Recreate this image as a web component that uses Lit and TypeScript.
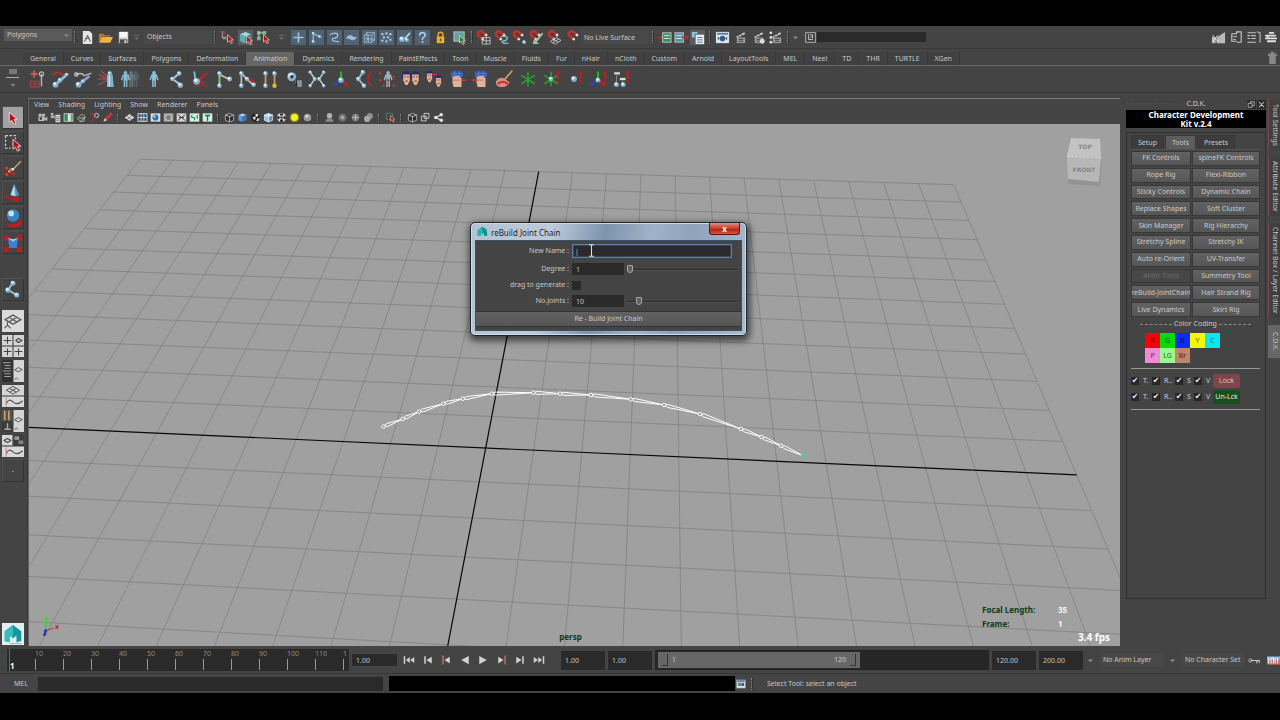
import { LitElement, html, css, svg } from "lit";
import { customElement } from "lit/decorators.js";

/* ---------- drawing primitives ---------- */
const ball = (x: number, y: number, r = 2) =>
  svg`<circle cx=${x} cy=${y} r=${r} fill="#7fb0cc"/><circle cx=${x - r * 0.25} cy=${y - r * 0.3} r=${r * 0.55} fill="#d8eef8"/>`;
const line = (d: string, c = "#a9c6d6", w = 1.4) =>
  svg`<path d=${d} fill="none" stroke=${c} stroke-width=${w} stroke-linecap="round" stroke-linejoin="round"/>`;
const fill = (d: string, c: string) => svg`<path d=${d} fill=${c}/>`;
const rect = (x: number, y: number, w: number, h: number, c: string) =>
  svg`<rect x=${x} y=${y} width=${w} height=${h} fill=${c}/>`;
const cursor = (x: number, y: number, c = "#b01218") =>
  svg`<path transform="translate(${x} ${y})" d="M0 0V8L2 6.300L3.600 9.500L5.300 8.700L3.800 5.600H6.300Z" fill=${c} stroke="#f3d9d9" stroke-width=".7"/>`;
const bang = (x = 13) => svg`<path d="M${x - 1.3} 1H${x + 1.5}L${x + 0.8} 8H${x - 0.6}Z" fill="#c01c20"/><circle cx=${x} cy="10" r="1.200" fill="#c01c20"/>`;
const magnet = (x = 0) => svg`<g transform="translate(${x} 0)"><path d="M7.500 10L3 6.500A3 3 0 0 1 7 2L11 5.500" fill="none" stroke="#c3302a" stroke-width="2.800"/><path d="M6.300 9L8.200 10.600M9.800 4.500L11.700 6.200" stroke="#e9e2e0" stroke-width="2.600"/></g>`;
const cube = (c1: string, c2: string, c3: string, s = "none") =>
  svg`<g stroke=${s} stroke-width="1"><path d="M2 4.500L8 2L14 4.500L8 7Z" fill=${c1}/><path d="M2 4.500L8 7V14.500L2 12Z" fill=${c2}/><path d="M14 4.500L8 7V14.500L14 12Z" fill=${c3}/></g>`;
const man = (x: number, c: string) =>
  svg`<circle cx=${x} cy="2.500" r="1.600" fill=${c}/><path d="M${x - 2} 4.500H${x + 2}L${x + 3.4} 9M${x - 2} 4.500L${x - 3.4} 9M${x - 1} 9V15M${x + 1} 9V15" stroke=${c} stroke-width="1.300" fill="none"/><path d="M${x - 1.7} 4H${x + 1.7}V9.500H${x - 1.7}Z" fill=${c}/>`;
const face = (x: number, y: number, s = 1) =>
  svg`<g transform="translate(${x} ${y}) scale(${s})"><path d="M-4 2Q-4-4 0-4Q4-4 4 2L2.800 3V-.5H-2.800V3Z" fill="#262c6c"/><path d="M-2.800-1H2.800V4L1 8H-1L-2.800 4Z" fill="#e3b092"/><path d="M-1.800 1H-.6M.6 1H1.800M-1 4.600H1" stroke="#5b2b25" stroke-width=".8"/></g>`;
const hand = svg`${fill("M3 1H13V7H3Z", "#2b4fb4")}${line("M3 3H13M3 5H13M6 1V7M10 1V7", "#6f92e0", 0.6)}${fill("M4 6L9 5L12 7L12 15H5L4 11Z", "#e2b196")}${line("M5 9H10", "#a86e55", 0.7)}`;
const axes3 = svg`${line("M8 9V2", "#28b02c", 2)}${line("M8 9L2 13.500", "#2848d0", 2)}${line("M8 9L14 13.500", "#c82020", 2)}`;
const star = svg`${line("M8 2V14M2.500 5L13.500 12M13.500 5L2.500 12", "#2a9c33", 1.4)}`;
const clap = svg`<path d="M4 8H13V14H4Z" fill="#9b9b9b"/><path d="M3.500 6.800L12 2.500L13 4.300L4.500 8.600Z" fill="#c9c9c9"/><path d="M5 6L7 7M8 4.400L10 5.600M6 10H11M6 12H11" stroke="#333" stroke-width=".9"/>`;
const diamondGrid = (y = 8, s = 1) => svg`<g transform="translate(8 ${y}) scale(${s})"><path d="M-6 0L0-3.500L6 0L0 3.500ZM-3-1.750L3 1.750M3-1.750L-3 1.750" fill="none" stroke="#555" stroke-width=".9"/></g>`;
const curveEd = (x: number, y: number, w: number, h: number) =>
  svg`<g transform="translate(${x} ${y})">${rect(0, 0, w, h, "#d9d9d9")}<path d="M3 ${h * 0.7}Q5 ${h * 0.1} 8 ${h * 0.5}T${w - 1} ${h * 0.4}" fill="none" stroke="#555" stroke-width=".8"/><path d="M3 0V${h}" stroke="#b66" stroke-width=".5"/></g>`;

/* ---------- icon table, every glyph on a 16 unit square ---------- */
const ICONS: Record<string, unknown> = {
  down: svg`${fill("M3 6H13L8 11Z", "#888")}`,
  downbar: svg`${line("M3 4H13", "#777", 1.2)}${fill("M4 8H12L8 12Z", "#777")}`,
  fileNew: svg`${fill("M3 1H10L13 4V15H3Z", "#e6e6e6")}${line("M5 12L8 6L11 12M6 9L10 9", "#666", 1.2)}`,
  fileOpen: svg`${fill("M1 4H6L7 5.500H13V7H4L2 13H1Z", "#b97c1d")}${fill("M4 7.500H16L13 13.500H1.500Z", "#edb33f")}`,
  fileSave: svg`${fill("M3 2H13V14H3Z", "#cfcfcf")}${rect(4, 2, 8, 6, "#f6f6f6")}${rect(4, 10, 8, 4, "#4b4b4b")}${rect(9, 11, 2, 3, "#ddd")}`,
  selHier: svg`${rect(1, 1, 4, 3, "#b8434a")}${rect(3, 7, 4, 3, "#6aa17a")}${line("M2.500 4V8.500H3", "#aaa", 1)}${cursor(8, 5)}`,
  selObj: svg`${rect(0, 0, 16, 16, "#5c5c5c")}${cube("#9ed9dc", "#58b0b6", "#3f8f97")}${cursor(9, 6)}`,
  selComp: svg`${rect(1, 1, 4, 4, "#6fae74")}${rect(7, 1, 4, 4, "#6fae74")}${rect(1, 7, 4, 4, "#6fae74")}${line("M3 3H9M3 3V9", "#cde", 0.8)}${cursor(8, 5)}`,
  mHandle: svg`${line("M8 2.500V13.500M2.500 8H13.500", "#9cc4dc", 2)}`,
  mJoint: svg`${line("M4 13V3L12 7", "#9cc4dc", 1.4)}${ball(4, 3)}${ball(12, 7)}${ball(4, 13)}`,
  mCurve: svg`${line("M3 4Q12 1 12 5T6 9Q3 13 13 13", "#9cc4dc", 1.6)}`,
  mSurf: svg`${fill("M1 9Q5 3 9 6T15 6Q12 13 8 11T1 9Z", "#8fc0de")}`,
  mLattice: svg`${line("M2 5H11V14H2ZM5 2H14V11M2 5L5 2M11 5L14 2M11 14L14 11M5 2V11H14M2 14L5 11M6.500 5V14M2 9.500H11", "#9cc4dc", 0.9)}`,
  mDyn: svg`${[[3, 4], [8, 3], [13, 4], [5, 8], [10, 8], [3, 12], [8, 13], [13, 11]].map(([a, b]) => ball(a, b, 1.5))}`,
  mRender: svg`${ball(5, 10, 3.5)}${ball(11, 11, 2.5)}${line("M9 9L14 3", "#c7dce8", 2)}`,
  mMisc: svg`${line("M4.500 5Q5 2 8 2T11.500 5Q11 7.500 8 8.500V10.500", "#a6cde6", 2)}<circle cx="8" cy="13.500" r="1.300" fill="#a6cde6"/>`,
  lock: svg`${line("M5.500 8V5Q5.500 2.500 8 2.500T10.500 5V8", "#d9a93a", 1.6)}${rect(4, 7, 8, 7, "#e9b52d")}${rect(7.3, 9, 1.5, 3, "#5a4510")}`,
  hilite: svg`<rect x="2" y="2" width="11" height="10" fill="#62a2a8" stroke="#b3c59a"/>${cursor(8, 6, "#3b7a3f")}`,
  snapGrid: svg`${magnet()}${line("M7 8H15V15H7ZM11 8V15M7 11.500H15", "#c9c9c9", 0.9)}`,
  snapCurve: svg`${magnet()}${line("M8 7Q15 6 14 9T9 12Q8 15 15 14", "#8cb8d8", 1.4)}`,
  snapPoint: svg`${magnet()}${ball(13, 13, 2)}`,
  snapProj: svg`${magnet()}${line("M6 14L14 4", "#9ccf98", 2)}${fill("M5 10L11 15L4 15Z", "#a8bfa6")}`,
  snapPlane: svg`${magnet()}${line("M4 12L10 8L15 11L9 15ZM7 10L12 13M12.500 9.500L6.500 13.500", "#c9c9c9", 0.9)}`,
  live: svg`${magnet(2)}`,
  histIn: svg`${fill("M1 7H6V5L9 8L6 11V9H1Z", "#be2b2b")}<rect x="6" y="3" width="9" height="10" fill="#3d8b6a" stroke="#b9c9c0"/>${line("M8 6H13M8 9H13", "#e4f0ea", 1)}`,
  histOut: svg`<rect x="1" y="3" width="9" height="10" fill="#4b96a0" stroke="#b9c9c0"/>${line("M3 6H8M3 9H8", "#e4f0ea", 1)}${fill("M9 7H13V5L16 8L13 11V9H9Z", "#be2b2b")}`,
  histOn: svg`${rect(0, 0, 16, 16, "#5c5c5c")}${rect(6, 5, 9, 10, "#e8edf2")}${line("M8 8H13M8 10.500H13M8 13H13", "#59708a", 1)}${fill("M2 2H8V4H5V8H2Z", "#8fc0e2")}`,
  rview: svg`${rect(1, 2, 14, 12, "#dfe7ee")}${rect(2, 3, 12, 2, "#5a7c9c")}<circle cx="8" cy="9" r="3" fill="#37597c"/>${fill("M3 7L5 9L3 11ZM13 7L11 9L13 11Z", "#37597c")}`,
  rframe: clap,
  ripr: svg`${clap}<circle cx="12" cy="12" r="2.600" fill="#ddd"/>`,
  rset: svg`${clap}${[[1, 3], [1, 8], [1, 13]].map(([a, b]) => svg`<circle cx=${a + 1} cy=${b} r="1.500" fill="#ddd"/>`)}`,
  inbox: svg`<rect x="1" y="1" width="14" height="14" fill="#3a3a3a" stroke="#bbb" stroke-width="1.300"/>${line("M5 4V11H11M7 4H11V9M7 9L10 6", "#ccc", 1.3)}`,
  sb1: svg`${fill("M1 7L5 9V14H1ZM6 8L15 2V14H6Z", "#b9b9b9")}${line("M2 6L7 12M7 6L2 12", "#eee", 1)}`,
  sb2: svg`${line("M3 4H8V2H13V13H9M3 4V12H8", "#c8c8c8", 1.2)}${line("M5 7H8M5 10H7", "#c8c8c8", 1)}`,
  sb3: svg`${line("M2 3H10M2 6H4M6 6H10M2 9H4M6 9H10M2 13H10M12 2L15 3V13", "#c8c8c8", 1.1)}`,
  sb4: svg`${line("M2 6H12M2 9H13M4 12H12M6 3H10M4 6V9", "#e2e2e2", 1.9)}`,
  trash: svg`${fill("M3 4H13V6H11.500V15H4.500V6H3Z", "#888")}${rect(6, 2, 4, 2, "#888")}`,

  s0: svg`${line("M3 3.500H8M5.500 1V6", "#e05555", 1.6)}${line("M12 4V14", "#b9b9b9", 1.2)}<circle cx="12" cy="3.500" r="1.800" fill="none" stroke="#bbb"/>${line("M2 10H10V15H2ZM6 10V15M2 12.500H10", "#a5404a", 0.9)}`,
  s1: svg`${line("M2 4Q7 0 9 4L14 3", "#b92f2f", 1.5)}${line("M4 13L13 5", "#8cbbd6", 2.4)}${ball(4, 13, 2.6)}${ball(8, 9, 2)}${ball(14, 4, 1.6)}`,
  s2: svg`${line("M2 4Q7 2 9 5L15 3", "#b9b9b9", 1.3)}${line("M4 13L13 6", "#8c9bd6", 2.4)}${ball(4, 13, 2.6)}${ball(8, 10, 1.8)}<circle cx="2" cy="4" r="1.500" fill="none" stroke="#ccc"/>`,
  s3: svg`${line("M1 4L8 8M0 8H8M1 13L8 9M3 1L9 7", "#b4534e", 1)}${fill("M8 4H13L14 15H8Z", "#7fb4d0")}${ball(10.5, 3, 2)}${line("M10 5V14", "#d5ecf6", 1)}`,
  s4: svg`${man(13, "#5a5e62")}${man(9, "#6c777d")}${man(4, "#8dbbd2")}`,
  s5: man(8, "#8fc3dd"),
  s6: svg`${line("M10 3L4 8L11 13", "#a9c6d6", 1.8)}${ball(10, 3)}${ball(4, 8)}${ball(11, 13.5, 2.4)}`,
  s7: svg`${line("M14 3L7 9L13 14", "#b92525", 2)}${line("M3 2L4 10", "#8cbbd6", 1.6)}${ball(5, 10, 3)}${line("M3 14H8", "#b92525", 1.5)}`,
  s8: svg`${line("M4 14V4L12 8", "#c5c59a", 1.6)}${ball(4, 3)}${ball(4, 14)}${ball(13, 8, 2.2)}<circle cx="4" cy="8.500" r="1.200" fill="#50b050"/>`,
  s9: svg`${line("M3 3V14M3 3L13 13", "#bcbcbc", 1.5)}${line("M8 7L14 10", "#b92525", 2)}${ball(3, 3)}${ball(3, 14)}${ball(8, 8)}${ball(14, 13)}`,
  s10: svg`${line("M4 3V14M12 3V14", "#b9a25a", 1.6)}${ball(4, 3)}${ball(4, 14)}${ball(12, 3)}<circle cx="12" cy="14" r="2" fill="#e0b53a"/><path d="M6 8H10" stroke="#c33" stroke-dasharray="1 1"/>`,
  s11: svg`${ball(6, 6, 4)}<circle cx="6" cy="6" r="1.500" fill="#333"/>${fill("M9 9H15V15H11V12H9Z", "#8d9499")}${line("M10 9V14", "#222", 1)}`,
  s12: svg`${line("M2 2L6 8L2 14M14 2L10 8L14 14", "#b9cdb9", 1.3)}${ball(2, 2, 1.6)}${ball(6, 8, 1.8)}${ball(2, 14, 1.6)}${ball(14, 2, 1.6)}${ball(10, 8, 1.8)}${ball(14, 14, 1.6)}`,
  s13: svg`${axes3}${ball(8, 9, 2.4)}`,
  s14: svg`${line("M7 2L3 8L8 14", "#a9c6d6", 1.6)}${ball(7, 2)}${ball(3, 8)}${ball(8, 14)}${line("M14 2Q9 8 14 14", "#b92525", 1.4)}`,
  s15: svg`${man(9, "#9db3bf")}${[[2, 3], [2, 9], [5, 14], [14, 6], [14, 14], [9, 9]].map(([a, b]) => svg`<circle cx=${a} cy=${b} r="1.100" fill="#c33"/>`)}`,
  s16: svg`${face(4, 5, 1.05)}${face(12, 5, 1.05)}`,
  s17: svg`${face(4, 4, 0.85)}${face(12, 8, 0.85)}${line("M7 4H10", "#c33", 1.2)}`,
  s18: svg`${hand}${line("M13 9H16", "#c33", 1.5)}`,
  s19: svg`${hand}${line("M0 9H4", "#c33", 1.5)}`,
  s20: svg`${line("M15 1L8 9", "#c7a25a", 1.5)}${fill("M1 10Q4 5 9 8L13 11Q10 16 4 15Q0 14 1 10Z", "#d98c7a")}${line("M3 12Q7 9 11 12", "#b92525", 1.5)}`,
  s21: star,
  s22: svg`${star}${ball(8, 8, 2)}${bang(14)}`,
  s23: svg`${line("M8 2V14M3 8H13", "#7d3038", 0.8)}${ball(8, 8, 2.6)}${bang(14)}`,
  s24: svg`${axes3}${ball(8, 9, 2.2)}${bang(14)}`,
  s25: svg`${rect(2, 2, 5, 2, "#ddd")}${rect(7, 7, 5, 2, "#ddd")}${line("M4 4V11M9.500 9V11", "#888", 0.8)}${ball(4, 13, 2.2)}${ball(10, 13, 2.2)}${bang(14)}`,

  cam: svg`${fill("M2 7H11V13H2ZM11 9L15 7V13L11 11Z", "#bdbdbd")}<circle cx="4.500" cy="4.500" r="2.500" fill="#bdbdbd"/><circle cx="9.500" cy="4.500" r="2.500" fill="#bdbdbd"/>${rect(4, 8, 3, 3, "#222")}`,
  camAttr: svg`${fill("M1 5H7V9H1Z", "#aaa")}<circle cx="3" cy="3" r="2" fill="#bbb"/>${rect(8, 4, 7, 11, "#ddd")}${line("M9.500 7H13.500M9.500 9.500H13.500M9.500 12H13.500", "#555", 1)}`,
  book: svg`${rect(1, 2, 14, 12, "#e9efe9")}${rect(2, 3, 5, 10, "#2f8d52")}${rect(9, 3, 3, 10, "#c8d8cd")}${rect(12, 3, 2, 10, "#2f8d52")}`,
  imgPlane: svg`${line("M2 9L9 3L14 7L7 13Z", "#8ab795", 1.4)}${line("M5 9L11 8M6 14L12 13V8", "#c5d8ca", 1)}`,
  pan: svg`<circle cx="11" cy="5" r="3" fill="none" stroke="#e0c8c8" stroke-width="1.400"/>${line("M9 8L3 14", "#b92b2b", 2)}${line("M2 3H7", "#b92b2b", 1.5)}`,
  grease: svg`${line("M13 3L5 11", "#c23a30", 4)}${fill("M2 14L4 9L7 12Z", "#e8d8c8")}`,
  pgrid: svg`${fill("M1 8L8 3L15 8L8 13Z", "#dcdcdc")}${line("M4 6L11 11M11 5.500L5 11", "#555", 0.9)}`,
  pfilm: svg`<rect x="1.500" y="2.500" width="13" height="11" fill="#32475c" stroke="#cfe0ee" stroke-width="1.400"/>${line("M2 8H14M6 3V13M10 3V13", "#cfe0ee", 1.3)}`,
  pres: svg`${rect(1, 2, 14, 12, "#cfe3f1")}<circle cx="8" cy="8" r="4.500" fill="#3974a8"/><circle cx="6.500" cy="6.500" r="1.500" fill="#e6f4ff"/>`,
  pgate: svg`${rect(1, 2, 14, 12, "#a8a8a8")}<circle cx="8" cy="8" r="4.500" fill="#808080" stroke="#ddd"/>`,
  pchart: svg`${rect(1, 2, 14, 12, "#d8d8d8")}${line("M3 4L13 12M13 4L3 12M5 8H11", "#333", 1.3)}`,
  psafe: svg`${rect(1, 2, 14, 12, "#d5efe0")}${line("M4 5V8H8V11M12 5V9", "#2f8d62", 1.8)}`,
  ptitle: svg`${rect(1, 2, 14, 12, "#d5efe0")}${line("M5 5H11M8 5V12", "#23764a", 2)}`,
  wire: cube("#3a3a3a", "#2c2c2c", "#2c2c2c", "#cfcfcf"),
  solid: cube("#a8d0f4", "#5a9be0", "#3676c2"),
  checker: svg`<circle cx="8" cy="8" r="6" fill="#1e1e1e"/>${fill("M8 3H12L11 7H8ZM4 7H8V11H5ZM11 9H14L12 13H9Z", "#e4e4e4")}`,
  texcube: cube("#cfe8f8", "#9ec6e2", "#5f98c4", "#eaf4fb"),
  lightball: svg`<circle cx="8" cy="8" r="6.500" fill="#d8d8d8"/>${fill("M6 2H10V5H6ZM2 6H5V10H2ZM6.500 6.500H9.500V9.500H6.500ZM11 6H14V10H11ZM6 11H10V14H6Z", "#1a1a1a")}`,
  yellow: svg`<circle cx="8" cy="8" r="7" fill="#8a8a20"/><circle cx="8" cy="8" r="5" fill="#f4f024"/>`,
  grayball: svg`<circle cx="8" cy="8" r="5.500" fill="#999"/><circle cx="7" cy="6" r="2.500" fill="#d4d4d4"/>`,
  shadow: svg`<circle cx="8" cy="5.500" r="4" fill="#b0b0b0"/>${fill("M2 14Q3 9 8 9T14 14Z", "#8a8a8a")}`,
  ao: svg`<circle cx="8" cy="8" r="6" fill="#6c6c6c"/><circle cx="8" cy="8" r="3" fill="#a3a3a3"/>`,
  mblur: svg`<circle cx="8" cy="8" r="5.500" fill="#7a7a7a"/>${line("M4 8H12M8 4V12", "#b8b8b8", 1.5)}`,
  aa: svg`<circle cx="10" cy="6" r="4.500" fill="#8e8e8e"/><circle cx="6" cy="10" r="4.500" fill="#a8a8a8"/>`,
  isolate: svg`<path d="M2 2H11V11H2Z" fill="none" stroke="#5fae6f" stroke-width="1.300" stroke-dasharray="2 1.500"/>${cursor(8, 5)}`,
  xray2: svg`<path d="M2 6H9V13H2ZM6 2H13V9H6Z" fill="none" stroke="#cfcfcf" stroke-width="1.300"/>`,
  share: svg`${line("M12 4L4 8L12 12", "#e2e2e2", 2)}${[[12, 4], [4, 8], [12, 12]].map(([a, b]) => svg`<circle cx=${a} cy=${b} r="2.600" fill="#e2e2e2"/>`)}`,

  tSelect: cursor(5, 3.5),
  tLasso: svg`<path d="M2 2H10V5M2 2V12H6" fill="none" stroke="#ccc" stroke-dasharray="2 1.200"/>${cursor(8, 5)}`,
  tPaint: svg`${line("M14 3L8 9", "#c99a5a", 1.4)}${line("M5 11Q6 9 8 9", "#dfe7c8", 2)}${[[3, 8], [3, 13], [8, 13], [6, 10]].map(([a, b]) => svg`<circle cx=${a} cy=${b} r="1.200" fill="#e3402e"/>`)}${line("M2 11L9 14", "#b01818", 1.2)}`,
  tMove: svg`${fill("M2 10L9 12L11 9L14 14L8 15L9 13.500L2 12Z", "#c41a1a")}${fill("M9 1L13 9.500Q9 11.500 6 9.500Z", "#4c94cc")}${fill("M9 1L10 10.500L6 9.500Z", "#a8d8f4")}`,
  tRotate: svg`${fill("M1 8Q2 14 8 13T14 8L15 13L10 15.500H5Z", "#c41a1a")}<circle cx="8" cy="6" r="5" fill="#3a83bf"/><circle cx="6.500" cy="4.300" r="2.300" fill="#bfe4f6"/>`,
  tScale: svg`${rect(1, 2, 4, 4, "#c41a1a")}${rect(11, 2, 4, 4, "#c41a1a")}${rect(1, 11, 4, 4, "#c41a1a")}${rect(11, 11, 4, 4, "#c41a1a")}${fill("M4 4L8 5L12 4L11 12H5Z", "#3f7fd0")}${fill("M4 4L8 5L12 4L8 7Z", "#a5cdf4")}`,
  tJoint: svg`${line("M8 2L4 8L11 12", "#a9c6d6", 1.4)}${ball(8, 2.5, 2)}${ball(4, 8, 2.2)}${ball(11, 12, 2)}`,
  lPersp: svg`${rect(0, 0, 16, 16, "#dadada")}${diamondGrid(7, 0.95)}${line("M2 13L4 11M4 11L6 13M4 11V9", "#555", 0.8)}`,
  lFour: svg`${rect(0, 0, 7.6, 7.6, "#d5d5d5")}${rect(8.4, 0, 7.6, 7.6, "#d5d5d5")}${rect(0, 8.4, 7.6, 7.6, "#d5d5d5")}${rect(8.4, 8.4, 7.6, 7.6, "#d5d5d5")}${line("M4 1.500V6M1.500 4H6.500M4 10V14.500M1.500 12H6.500M12 10V14.500M9.500 12H14.500M10 4L12 2.500L14.500 4L12 5.500Z", "#444", 0.8)}`,
  lOut: svg`${rect(0, 0, 7.6, 16, "#303030")}${line("M1 2H6M2 4H6M2 6H6M1 8H6M2 10H6M2 12H6", "#bbb", 0.6)}${rect(8.4, 0, 7.6, 16, "#d5d5d5")}${line("M9.500 7L12 5.500L14.800 7L12 8.500ZM9.500 14L10.500 13L11.500 14", "#555", 0.7)}`,
  lGraph: svg`${rect(0, 0, 16, 7.6, "#d5d5d5")}${diamondGrid(3.8, 0.8)}${curveEd(0, 8.4, 16, 7.6)}`,
  lHyper: svg`${rect(0, 0, 7.6, 7.6, "#5a5148")}${rect(0, 8.4, 7.6, 7.6, "#3c3c3c")}${line("M2 1V7M5 1V7", "#c4a27a", 1.2)}${line("M2 14H6M4 10V13", "#aaa", 1)}${rect(8.4, 0, 7.6, 16, "#d5d5d5")}${line("M9.500 7L12 5.500L14.800 7L12 8.500ZM9.500 14L10.500 13L11.500 14", "#555", 0.7)}`,
  lMulti: svg`${rect(0, 0, 7.6, 7.6, "#d5d5d5")}${line("M1.500 4L4 2.500L6.500 4L4 5.500Z", "#444", 0.8)}${rect(8.4, 0, 7.6, 7.6, "#3c3c3c")}${rect(9, 1, 3.5, 2.5, "#999")}${rect(12, 4, 3.5, 2.5, "#888")}${curveEd(0, 8.4, 16, 7.6)}`,
  logo: svg`${rect(0, 0, 16, 16, "#e3eef0")}${fill("M2 13V6L8 1.500L14 6V13L10.500 14V9L8 11L5.500 9V14Z", "#14979a")}${fill("M2 6L8 1.500L8 11L5.500 9V14L2 13Z", "#35bdbc")}${line("M6 15H14", "#8aa", 0.6)}`,
  mayaSmall: svg`${fill("M1 14V6L8 1L14 5L15 14H10V9L8 12L6 9V14Z", "#0e8f8f")}${fill("M1 6L8 1V12L6 9V14L1 14Z", "#27b3ae")}`,
  editor: svg`<rect x="1" y="1.500" width="14" height="13" fill="#dfe6ec" stroke="#8796a3"/>${rect(2, 2, 12, 2.5, "#4a77a2")}${rect(3, 6, 10, 5, "#3d4a56")}${line("M4 7.500H11M4 9.500H9", "#cfe0ee", 0.8)}`,
  key: svg`${line("M4 8H14M11 8V11M14 8V10", "#ccc", 1.4)}<circle cx="3" cy="8" r="2" fill="none" stroke="#ccc"/>`,
  prefs: svg`${rect(0, 3, 16, 5, "#8fb0d8")}${rect(0, 8, 16, 5, "#d86a62")}${line("M2 5V11M5 5V11M5 5H8V11M10 5V11M13 5V11", "#f2f2f2", 1.3)}`,
  pStart: svg`${rect(1, 3, 2, 10, "#d2d2d2")}${fill("M9 4V12L4 8ZM15 4V12L9.500 8Z", "#d2d2d2")}`,
  pBack: svg`${rect(3, 3, 2, 10, "#d2d2d2")}${fill("M13 3.500V12.500L6 8Z", "#d2d2d2")}`,
  pPrevKey: svg`${rect(3, 2, 2, 12, "#c0686a")}${fill("M13 3.500V12.500L6 8Z", "#d2d2d2")}`,
  pRev: fill("M13 2.500V13.500L3 8Z", "#d2d2d2"),
  pPlay: fill("M3 2.500V13.500L13 8Z", "#d2d2d2"),
  pNextKey: svg`${fill("M3 3.500V12.500L10 8Z", "#d2d2d2")}${rect(11, 2, 2, 12, "#c0686a")}`,
  pFwd: svg`${fill("M3 3.500V12.500L10 8Z", "#d2d2d2")}${rect(11, 3, 2, 10, "#d2d2d2")}`,
  pEnd: svg`${fill("M1 4V12L6.500 8ZM7 4V12L12 8Z", "#d2d2d2")}${rect(13, 3, 2, 10, "#d2d2d2")}`,
  close: line("M4 4L12 12M12 4L4 12", "#c8c8c8", 1.8),
  float: svg`<path d="M2 6H9V13H2ZM6 6V3H13V10H9" fill="none" stroke="#c8c8c8" stroke-width="1.300"/>`,
  ibeam: svg`<path d="M5 1H7.500L8 1.500L8.500 1H11M8 1.500V14.500M5 15H7.500L8 14.500L8.500 15H11" fill="none" stroke="#e0e0e0" stroke-width="1.300"/>`,
};
const icon = (name: string) => html`<svg class="ico" viewBox="0 0 16 16" aria-hidden="true">${ICONS[name]}</svg>`;

const shared = css`
  * { box-sizing: border-box; }
  button, input, select { font: inherit; color: inherit; margin: 0; padding: 0; border: 0; border-radius: 0; background: none; appearance: none; min-width: 0; }
  button { display: flex; align-items: center; justify-content: center; white-space: nowrap; overflow: hidden; }
  .ico { display: block; flex: none; width: 15px; height: 15px; }
  .field { background: #2a2a2a; color: #c4c4c4; padding: 0 4px; }
`;

/* ---------- perspective floor grid ---------- */
const project = (u: number, v: number) => {
  const w = 1 - 0.02899 * u + 0.4146 * v;
  return [(559.69 * u + 276.34 * v + 485.7) / w, (13.04 * u - 205.11 * v + 448) / w];
};
const gridLine = (a: number[], b: number[]) => `M${project(a[0], a[1]).map((n) => n.toFixed(1)).join(" ")}L${project(b[0], b[1]).map((n) => n.toFixed(1)).join(" ")}`;
const STEPS = Array.from({ length: 25 }, (_, i) => (i - 12) / 12);
const FLOOR = STEPS.filter((s) => s !== 0).map((s) => gridLine([s, -1], [s, 1]) + gridLine([-1, s], [1, s])).join("");
const AXES = gridLine([0, -1], [0, 1]) + gridLine([-1, 0], [1, 0]);
const JOINTS = [[383.5, 426.5], [402.7, 419], [419, 411.7], [443.3, 403.7], [462.7, 398.7], [491.7, 393.7], [533.3, 392.7], [560, 393.7], [591, 395], [630.7, 399.3], [664, 405], [700, 414], [741, 429], [761.5, 437], [781, 445.7], [803, 455.7]];
const BONES = JOINTS.slice(1).map((b, i) => {
  const a = JOINTS[i], dx = b[0] - a[0], dy = b[1] - a[1], l = Math.hypot(dx, dy), k = 4 / l;
  const mx = a[0] + dx * k, my = a[1] + dy * k, nx = (-dy / l) * 1.5, ny = (dx / l) * 1.5;
  return `M${a}L${mx + nx} ${my + ny}L${b}L${mx - nx} ${my - ny}Z`;
}).join("");

@customElement("maya-viewport")
class MayaViewport extends LitElement {
  static styles = [shared, css`
    :host { display: block; position: relative; overflow: hidden; background: #a0a0a0; font-size: 8px; font-weight: 700; }
    .scene { display: block; width: 100%; height: 100%; }
    .hud { position: absolute; right: 10px; bottom: 3px; display: grid; grid-template-columns: 76px 52px; row-gap: 3px; line-height: 11px; color: #0b3b1d; }
    .val { color: #f4f4f4; }
    .fps { grid-column: 1 / 3; text-align: right; font-size: 10px; color: #fff; }
    .cam { position: absolute; left: 0; right: 8px; bottom: 4px; text-align: center; line-height: 11px; color: #0b3b1d; }
    .cubetext { font: 700 6px "DejaVu Sans", sans-serif; fill: #868686; text-anchor: middle; }
    .axis { font-size: 7px; text-anchor: middle; }
  `];
  render() {
    return html`
      <svg class="scene" viewBox="29 124 1091 522" preserveAspectRatio="xMinYMin slice">
        <path d=${FLOOR} fill="none" stroke="#828282" stroke-width=".8" />
        <path d=${AXES} fill="none" stroke="#080808" stroke-width="1.200" />
        <path d=${BONES} fill="none" stroke="#fff" stroke-width="1" />
        ${JOINTS.map(([x, y], i) => svg`<circle cx=${x} cy=${y} r="1.800" fill=${i === 15 ? "#5cc4a4" : "#a0a0a0"} stroke=${i === 15 ? "#5cc4a4" : "#fff"} stroke-width=".9"/>`)}
        <g>
          <path d="M1067 181L1099 183L1101 160L1067 157Z" transform="translate(1 3)" fill="#868686" opacity=".5" />
          <path d="M1071 138L1100 139L1101 157L1067 156Z" fill="#c3c3c3" /><path d="M1067 156L1101 157L1099 182L1068 179Z" fill="#b7b7b7" />
          <path d="M1067 156.500L1101 157.500" stroke="#d8d8d8" stroke-dasharray="3 1" />
          <text class="cubetext" x="1085" y="149">TOP</text><text class="cubetext" x="1084" y="172">FRONT</text>
        </g>
        <path d="M46 628V617" stroke="#35d935" stroke-width="2" /><path d="M45 631L54 628" stroke="#c83030" /><path d="M46 629L44 636" stroke="#2030c0" stroke-width="2" />
        <text class="axis" x="57" y="628.500" fill="#d82020">x</text><text class="axis" x="46" y="621" fill="#35d935">y</text><text class="axis" x="45" y="635" fill="#2030c0">z</text>
      </svg>
      <div class="cam">persp</div>
      <div class="hud"><span>Focal Length:</span><span class="val">35</span><span>Frame:</span><span class="val">1</span><span class="fps">3.4 fps</span></div>
    `;
  }
}

@customElement("joint-dialog")
class JointDialog extends LitElement {
  static styles = [shared, css`
    :host { display: block; width: 277px; padding: 0 4px 4px; border: 1px solid #1d2630; border-radius: 5px; color: #c8c8c8;
      background: linear-gradient(100deg, #b4c2d2 0, #bccada 28%, #7c94ae 46%, #a0b2c6 62%, #8ea3ba 75%, #a9bbce 100%);
      box-shadow: inset 0 0 0 1px #cfdbe6, 1px 3px 7px 2px rgba(0,0,0,.6); }
    .title { display: flex; align-items: center; gap: 3px; height: 17px; color: #1c2630; padding: 0 2px; }
    .title .ico { width: 11px; height: 11px; }
    .name { flex: 1; font-size: 8px; padding-top: 2px; }
    .x { align-self: flex-start; width: 31px; height: 12px; border: 1px solid #5e1a16; border-top: 0; border-radius: 0 0 3px 3px; background: linear-gradient(#dc9084, #c33b2b 50%, #b5200f 55%, #d4553e); color: #fff; font-weight: 700; font-size: 8px; line-height: 10px; overflow: visible; }
    .body { position: relative; background: #444; border: 1px solid #38506a; padding: 0 0 3px; }
    .row { display: grid; grid-template-columns: 93px 52px 1fr; column-gap: 3px; align-items: center; height: 16px; padding-right: 3px; }
    .row.tall { height: 20px; }
    .lab { text-align: right; white-space: nowrap; }
    .field { height: 12px; width: 100%; }
    .wide { grid-column: 2 / 4; width: 160px; height: 14px; padding: 0 2px; border: 1px solid #5d7fa3; outline: 1px solid #37465a; outline-offset: -2px; }
    .beam { position: absolute; left: 109px; top: 3px; pointer-events: none; }
    .beam .ico { width: 13px; height: 13px; }
    .check { width: 9px; height: 9px; background: #292929; }
    .range { width: 100%; height: 10px; background: linear-gradient(#2c2c2c, #2c2c2c) 0 5px / 100% 1px no-repeat, linear-gradient(#555, #555) 0 6px / 100% 1px no-repeat; }
    .range::-webkit-slider-thumb { appearance: none; width: 6px; height: 8px; border: 1px solid #aaa; border-radius: 1px 1px 3px 3px; background: #5f5f5f; }
    .go { width: 100%; height: 16px; margin-top: 2px; background: linear-gradient(#626262, #555); border-bottom: 1px solid #333; border-top: 1px solid #333; }
  `];
  render() {
    return html`
      <div class="title">${icon("mayaSmall")}<span class="name">reBuild Joint Chain</span><button class="x" aria-label="Close">x</button></div>
      <form class="body" @submit=${(e: Event) => e.preventDefault()}>
        <div class="row tall"><label class="lab" for="nm">New Name :</label><input class="field wide" id="nm" value="|"></div>
        <div class="row"><label class="lab" for="dg">Degree :</label><input class="field" id="dg" value="1"><input class="range" type="range" aria-label="Degree slider" min="1" max="7" value="1"></div>
        <div class="row"><label class="lab" for="dr">drag to generate :</label><input class="check" id="dr" type="checkbox"></div>
        <div class="row"><label class="lab" for="nj">No.Joints :</label><input class="field" id="nj" value="10"><input class="range" type="range" aria-label="Joint count slider" min="1" max="110" value="10"></div>
        <button class="go">Re - Build Joint Chain</button>
        <span class="beam">${icon("ibeam")}</span>
      </form>`;
  }
}

const TOOLS = ["FK Controls", "spineFK Controls", "Rope Rig", "Flexi-Ribbon", "Sticky Controls", "Dynamic Chain", "Replace Shapes", "Soft Cluster", "Skin Manager", "Rig Hierarchy", "Stretchy Spline", "Stretchy IK", "Auto re-Orient", "UV-Transfer", "Anim-Tools", "Summetry Tool", "reBuild-JointChain", "Hair Strand Rig", "Live Dynamics", "Skirt Rig"];
const SWATCHES = [["R", "#f00606", "#7c0000"], ["G", "#08dc08", "#056005"], ["B", "#0a2cf4", "#04105c"], ["Y", "#f6f60a", "#5c5c06"], ["C", "#08e8f0", "#066064"], ["P", "#f08ad8", "#5c3050"], ["LG", "#9cf88c", "#305c28"], ["Br", "#c08468", "#4c2c1c"]];
const LOCKS = [{ name: "Lock", tone: "", marks: ["T.", "R..", "S", "V"] }, { name: "Un-Lck", tone: "un", marks: ["T.", "R..", "S", "V"] }];

@customElement("cdk-panel")
class CdkPanel extends LitElement {
  static styles = [shared, css`
    :host { display: flex; flex-direction: column; padding: 0 2px 0 6px; color: #cacaca; }
    .bar { display: grid; grid-template-columns: 1fr auto 1fr; align-items: center; height: 12px; }
    .wins { display: flex; justify-content: flex-end; gap: 1px; }
    .wins .ico { width: 9px; height: 9px; background: #2c2c2c; }
    .dots { height: 4px; margin-right: 12px; background: radial-gradient(circle, #555 30%, transparent 40%) 0 0 / 3px 3px; }
    .head { background: #000; color: #fff; font-weight: 700; font-size: 8px; line-height: 9px; height: 18px; text-align: center; }
    .frame { flex: 1 1 auto; max-height: 467px; margin-top: 4px; border: 1px solid #2f2f2f; padding: 2px 5px 2px 4px; }
    .tabs { display: flex; gap: 1px; height: 14px; }
    .tab { padding: 0 6px; background: #3c3c3c; border: 1px solid #373737; border-bottom: 0; }
    .on { background: #5d5d5d; }
    .tools { display: grid; grid-template-columns: 60px 1fr; grid-auto-rows: 1fr; gap: 2px 1px; height: 168px; padding-top: 1px; border-top: 1px solid #555; }
    .tool { background: linear-gradient(#626262, #565656); border: 1px solid #383838; }
    .tool:disabled { background: #474747; color: #6e6e6e; }
    .cc { display: flex; align-items: center; gap: 2px; height: 14px; padding: 0 9px; white-space: nowrap; }
    .dash { flex: 1; border-top: 1px dashed #8a8a8a; }
    .sw { display: grid; grid-template-columns: repeat(5, 15px); grid-auto-rows: 15px; margin: 2px 0 0 14px; padding-bottom: 5px; }
    .rule { border-top: 1px solid #989898; }
    .locks { display: grid; gap: 2px; padding: 5px 0; }
    .lock { display: grid; grid-template-columns: 21px 23px 19px 19px 1fr; align-items: center; height: 14px; }
    .ck { display: flex; align-items: center; gap: 4px; }
    .box { width: 8px; height: 8px; background: #262626; color: #eee; display: grid; place-items: center; }
    .box:checked::before { content: "✔"; font: 8px/8px "DejaVu Sans", sans-serif; }
    .lk { width: 27px; height: 14px; background: #80454a; border-radius: 2px; }
    .un { background: #17501c; color: #e8e8e8; }
  `];
  render() {
    return html`
      <div class="bar"><span class="dots"></span><span>C.D.K.</span><span class="wins">${icon("float")}${icon("close")}</span></div>
      <div class="head">Character Development<br>Kit v.2.4</div>
      <div class="frame">
        <div class="tabs"><button class="tab">Setup</button><button class="tab on">Tools</button><button class="tab">Presets</button></div>
        <div class="tools">${TOOLS.map((t) => html`<button class="tool" ?disabled=${t === "Anim-Tools"}>${t}</button>`)}</div>
        <div class="cc"><span class="dash"></span>Color Coding<span class="dash"></span></div>
        <div class="sw">${SWATCHES.map(([t, bg, fg]) => html`<button style="background:${bg};color:${fg}">${t}</button>`)}</div>
        <div class="rule"></div>
        <div class="locks">${LOCKS.map((r) => html`<div class="lock">
          ${r.marks.map((m) => html`<label class="ck"><input class="box" type="checkbox" checked>${m}</label>`)}
          <button class="lk ${r.tone}">${r.name}</button></div>`)}</div>
        <div class="rule"></div>
      </div>`;
  }
}

const SHELF_TABS = ["General", "Curves", "Surfaces", "Polygons", "Deformation", "Animation", "Dynamics", "Rendering", "PaintEffects", "Toon", "Muscle", "Fluids", "Fur", "nHair", "nCloth", "Custom", "Arnold", "LayoutTools", "MEL", "Neel", "TD", "THR", "TURTLE", "XGen"];
const FRAME_MARKS = ["10", "20", "30", "40", "50", "60", "70", "80", "90", "100", "110", "1"];
const group = (names: string[], cls = "") => html`<div class="group ${cls}">${names.map((n) => html`<button class="ib" aria-label=${n}>${icon(n)}</button>`)}</div>`;

@customElement("app-root")
class AppRoot extends LitElement {
  static styles = [shared, css`
    :host { display: grid; grid-template-rows: 23px 16px 28px 5px minmax(0, 1fr) 27px 20px; height: 100vh; padding: 26px 0 27px; box-sizing: border-box; background: #000; font: 7px/10px "Noto Sans", sans-serif; color: #c8c8c8; overflow: hidden; }
    :host > * { background: #444; }
    .group { display: flex; justify-content: space-around; align-items: center; }
    .ib { width: 17px; height: 17px; flex: 0 1 auto; overflow: visible; }
    .lit .ib { background: #526270; border: 1px solid #3b444c; }
    .lit .ico { width: 13px; height: 13px; }
    .status { display: grid; grid-template-columns: 4px 68px 6px 54px 12px 68px 6px 54px 18px 141px 38px 6px 106px 68px 7px 50px 8px 71px 6px 12px 14px 109px 1fr 70px; align-items: center; border-bottom: 1px solid #3a3a3a; }
    .sep { justify-self: center; width: 2px; height: 12px; border-left: 1px dotted #888; border-right: 1px solid #333; }
    .mini .ico { width: 9px; height: 9px; }
    .small .ico { width: 11px; height: 11px; }
    .drop { display: flex; align-items: center; position: relative; }
    .raised { align-self: start; padding-top: 3px; }
    .pick { background: #5a5a5a; height: 12px; width: 100%; padding: 0 3px; }
    .pick option { background: #444; }
    .drop .ico { position: absolute; right: 1px; bottom: 1px; width: 9px; height: 9px; pointer-events: none; }
    .flat { height: 14px; width: 100%; padding: 0 3px; background: #484848; }
    .tabs { display: flex; align-items: flex-end; padding-left: 23px; }
    .tab { height: 14px; padding: 0 7px; border-right: 1px solid #383838; background: #404040; border-top: 1px solid #494949; }
    .on { background: #666; }
    .fillr { flex: 1; }
    .shelf { display: grid; grid-template-columns: 25px 608px 1fr; border-top: 1px solid #6a6a6a; border-bottom: 1px solid #333; align-items: center; }
    .knob { display: grid; gap: 3px; justify-items: center; }
    .kb { width: 8px; height: 5px; background: #777; } .kl { width: 13px; height: 1px; background: #aaa; }
    .knob .ico { width: 8px; height: 8px; }
    .shelf .ib { width: 20px; height: 20px; }
    .shelf .ib .ico { width: 18px; height: 18px; }
    .main { display: grid; grid-template-columns: 28px minmax(0, 1fr) 148px 12px; min-height: 0; }
    .box { display: flex; flex-direction: column; gap: 2px; padding: 8px 3px 1px 2px; min-height: 0; border-right: 1px solid #383838; }
    .tb { width: 22px; height: 23px; border: 1px solid #505050; border-right-color: #333; border-bottom-color: #333; flex: none; }
    .tb .ico { width: 20px; height: 20px; }
    .sel { background: #a2a2a2; }
    .lay { border: 0; }
    .lay .ico { width: 22px; height: 22px; }
    .gap { height: 20px; }
    .grow { flex: 1; }
    .view { display: grid; grid-template-rows: 12px 13px minmax(0, 1fr); border-top: 1px solid #777; border-left: 1px solid #666; min-height: 0; position: relative; }
    .menu { display: flex; gap: 9px; padding-left: 5px; align-items: center; }
    .pbar { display: flex; align-items: center; padding-left: 7px; overflow: hidden; gap: 4px; }
    .pbar .group { gap: 1px; }
    .pbar .ib { width: 12px; height: 12px; }
    .pbar .ico { width: 11px; height: 11px; }
    .pbar .sep { height: 8px; }
    .float { position: absolute; left: 441px; top: 123px; }
    .side { display: flex; flex-direction: column; gap: 7px; padding-top: 2px; overflow: hidden; }
    .vt { writing-mode: vertical-rl; width: 12px; padding: 4px 0; justify-content: flex-start; background: #3f3f3f; border-left: 1px solid #7a4a4a; overflow: visible; }
    .vt.on { background: #666; padding: 7px 0; border-color: #666; }
    .time { display: grid; grid-template-columns: 4px 342px 45px 158px 44px 44px minmax(0, 1fr) 44px 44px 11px 65px 11px 63px 32px; column-gap: 3px; align-items: center; padding-top: 1px; }
    .line { display: flex; height: 22px; background: #2a2a2a; overflow: hidden; color: #8d8d8d; }
    .first { width: 28px; flex: none; display: flex; align-items: flex-end; font-size: 8px; color: #fff; font-weight: 700; }
    .now { border-left: 1px solid #666; margin-left: 2px; height: 100%; display: flex; align-items: flex-end; }
    .tick { flex: 0 0 28px; line-height: 10px; }
    .tick::after { content: ""; display: block; height: 11px; border-left: 1px solid #9a9a9a; }
    .time .field { height: 19px; width: 100%; }
    .time .short { height: 12px; }
    .play { padding-right: 10px; }
    .play .ico { width: 12px; height: 12px; }
    .track { background: #262626; height: 20px; border: 1px solid #222; padding: 1px 2px; }
    .thumb { display: flex; justify-content: space-between; align-items: center; width: 202px; height: 100%; background: #676767; padding: 0 4px; }
    .grip { border-right: 1px solid #333; height: 12px; width: 6px; border-bottom: 1px solid #333; }
    .num { padding: 0 4px; }
    .end { display: flex; align-items: center; justify-content: space-between; }
    .end .ico { width: 13px; height: 13px; }
    .cmd { display: grid; grid-template-columns: 38px 345px 352px 12px 10px 1fr; align-items: center; border-top: 1px solid #383838; }
    .mel { padding-left: 14px; }
    .out { background: #000; height: 15px; margin-left: 6px; }
    .cin { height: 14px; width: 100%; }
    .cmd .ico { width: 10px; height: 10px; }
    .help { padding-left: 10px; }
  `];
  render() {
    const sep = html`<i class="sep"></i>`;
    return html`
      <header class="status">
        <span></span>
        <div class="drop raised"><select class="pick" aria-label="Menu set"><option>Polygons</option></select>${icon("down")}</div>${sep}
        ${group(["fileNew", "fileOpen", "fileSave"])}<div class="mini">${icon("downbar")}</div>
        <div class="drop"><select class="flat" aria-label="Selection mask"><option>Objects</option></select></div>${sep}
        ${group(["selHier", "selObj", "selComp"])}${group(["downbar"], "mini")}
        ${group(["mHandle", "mJoint", "mCurve", "mSurf", "mLattice", "mDyn", "mRender", "mMisc"], "lit")}
        ${group(["lock", "hilite"])}${sep}
        ${group(["snapGrid", "snapCurve", "snapPoint", "snapProj", "snapPlane", "live"])}
        <input class="flat" aria-label="Live surface" value="No Live Surface">${sep}
        ${group(["histIn", "histOut", "histOn"])}${sep}
        ${group(["rview", "rframe", "ripr", "rset"])}${sep}
        <div class="mini">${icon("down")}</div>${group(["inbox"], "small")}
        <input class="field" aria-label="Quick rename"><span></span>
        ${group(["sb1", "sb2", "sb3", "sb4"])}
      </header>
      <nav class="tabs">${SHELF_TABS.map((t) => html`<button class="tab ${t === "Animation" ? "on" : ""}">${t}</button>`)}<span class="fillr"></span>${icon("trash")}</nav>
      <div class="shelf"><div class="knob"><i class="kb"></i><i class="kl"></i>${icon("down")}</div>${group(Array.from({ length: 26 }, (_, i) => "s" + i))}<span></span></div>
      <div></div>
      <main class="main">
        <div class="box">
          ${["tSelect", "tLasso", "tPaint", "tMove", "tRotate", "tScale"].map((t, i) => html`<button class="tb ${i ? "" : "sel"}" aria-label=${t}>${icon(t)}</button>`)}
          <span class="gap"></span><button class="tb" aria-label="Joint">${icon("tJoint")}</button><span></span><span></span><span></span>
          ${["lPersp", "lFour", "lOut", "lGraph", "lHyper", "lMulti"].map((t) => html`<button class="tb lay" aria-label=${t}>${icon(t)}</button>`)}
          <button class="tb">-</button><span class="grow"></span><button class="tb lay" aria-label="Maya">${icon("logo")}</button>
        </div>
        <section class="view">
          <nav class="menu">${["View", "Shading", "Lighting", "Show", "Renderer", "Panels"].map((m) => html`<button>${m}</button>`)}</nav>
          <div class="pbar">
            ${group(["cam", "camAttr", "book", "imgPlane", "pan", "grease"])}${sep}
            ${group(["pgrid", "pfilm", "pres", "pgate", "pchart", "psafe", "ptitle"])}${sep}
            ${group(["wire", "solid", "checker", "texcube", "lightball", "yellow", "grayball"])}${sep}
            ${group(["shadow", "ao", "mblur", "aa"])}${sep}${group(["isolate"])}${sep}${group(["wire", "xray2", "share"])}
          </div>
          <maya-viewport></maya-viewport>
          <joint-dialog class="float"></joint-dialog>
        </section>
        <cdk-panel></cdk-panel>
        <div class="side"><button class="vt">Tool Settings</button><button class="vt">Attribute Editor</button><button class="vt">Channel Box / Layer Editor</button><button class="vt on">C.D.K.</button></div>
      </main>
      <div class="time">
        <span></span>
        <div class="line"><div class="first"><span class="now">1</span></div>${FRAME_MARKS.map((m) => html`<div class="tick">${m}</div>`)}</div>
        <input class="field short" aria-label="Current time" value="1.00">
        ${group(["pStart", "pBack", "pPrevKey", "pRev", "pPlay", "pNextKey", "pFwd", "pEnd"], "play")}
        <input class="field" aria-label="Start" value="1.00"><input class="field" aria-label="Range start" value="1.00">
        <div class="track"><div class="thumb"><i class="grip"></i><span class="num">1</span><span class="fillr"></span><span class="num">120</span><i class="grip"></i></div></div>
        <input class="field" aria-label="Range end" value="120.00"><input class="field" aria-label="End" value="200.00">
        <div class="mini">${icon("down")}</div><select class="flat" aria-label="Animation layer"><option>No Anim Layer</option></select>
        <div class="mini">${icon("down")}</div><select class="flat" aria-label="Character set"><option>No Character Set</option></select>
        <div class="end">${icon("key")}${icon("prefs")}</div>
      </div>
      <footer class="cmd">
        <label class="mel" for="cmd">MEL</label><input class="field cin" id="cmd"><output class="out"></output>${group(["editor"])}${sep}
        <span class="help">Select Tool: select an object</span>
      </footer>`;
  }
}
